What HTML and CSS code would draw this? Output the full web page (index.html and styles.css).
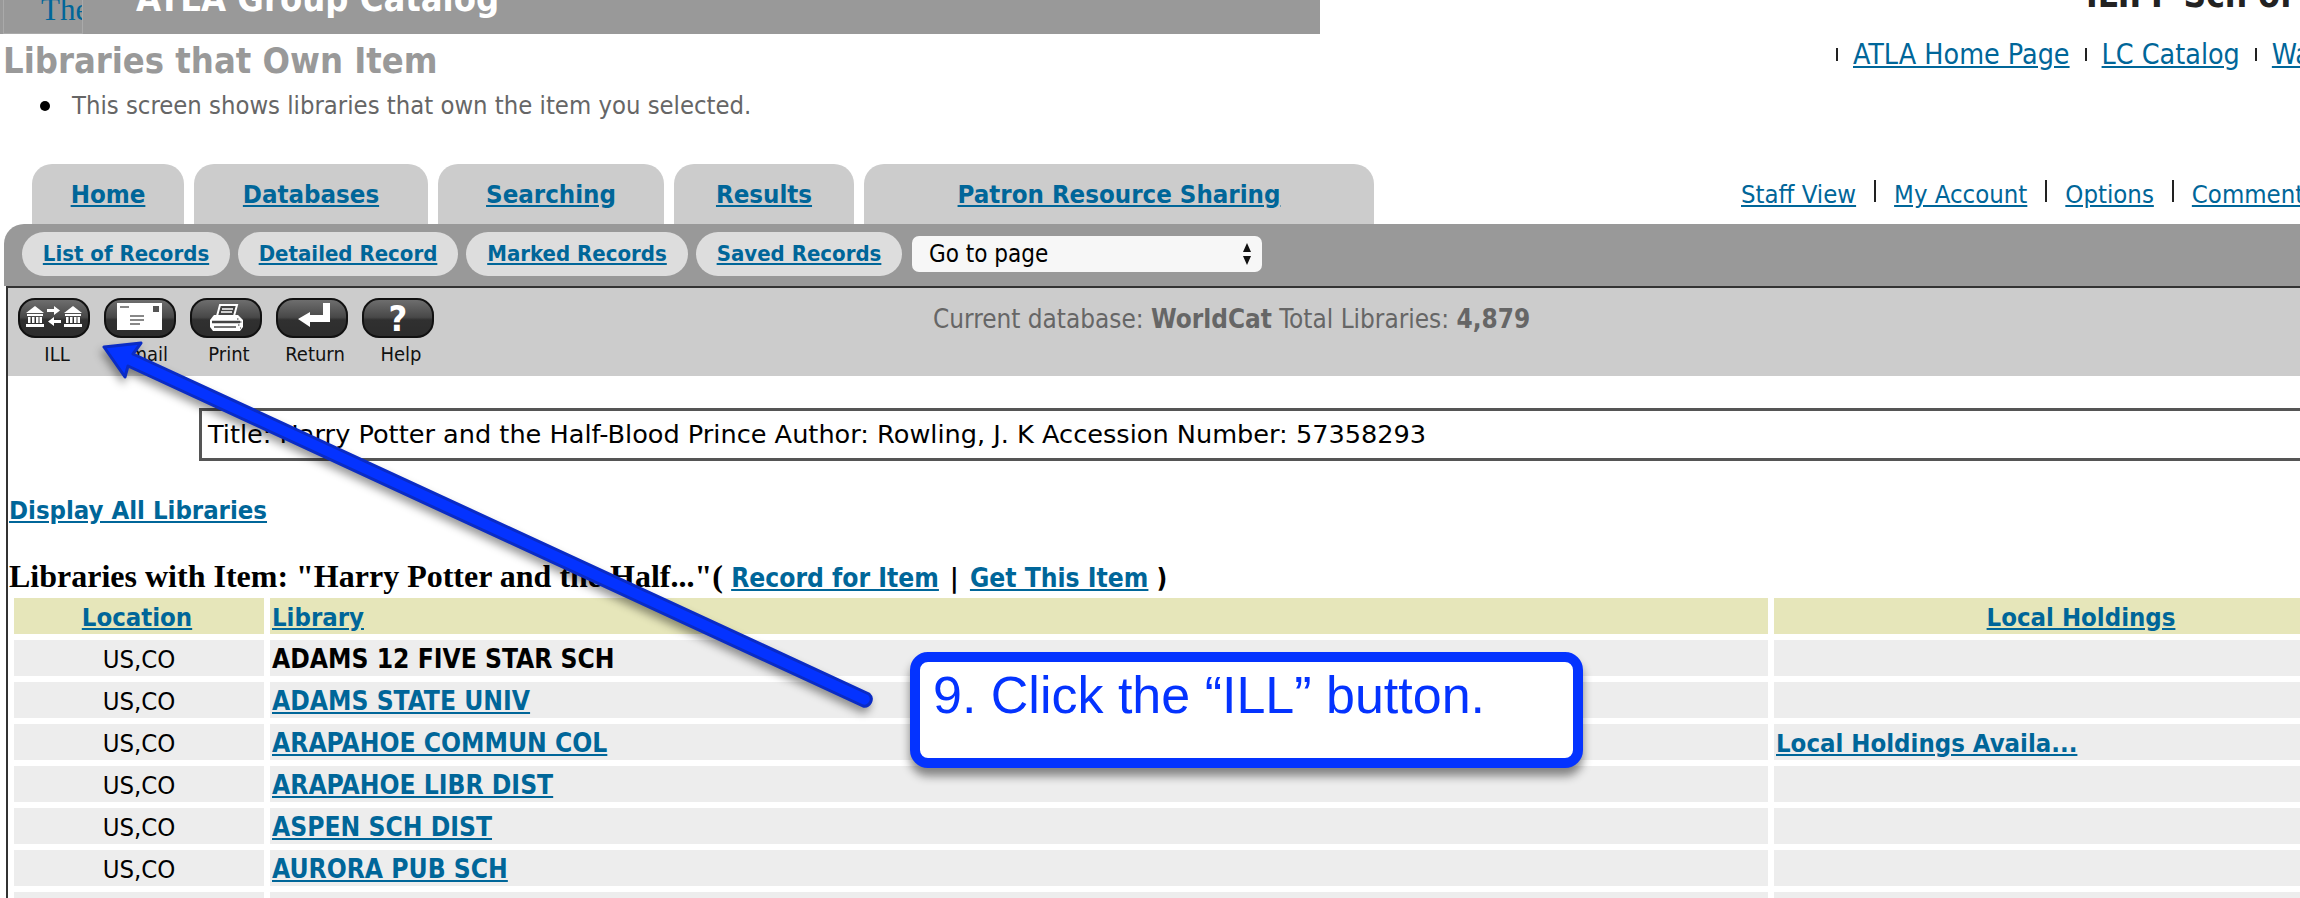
FILE: index.html
```html
<!DOCTYPE html>
<html lang="en">
<head>
    <meta charset="UTF-8">
    <title>Libraries that Own Item</title>
    <link rel="stylesheet" href="styles.css">
</head>
<body>
    <div class="top">
        <div class="banner">
            <div class="logo"><span>The</span></div>
            <div class="catalog-name">ATLA Group Catalog</div>
        </div>
        <div class="org-name">ILIFF Sch of</div>
    </div>

    <div class="intro">
        <div>
            <h1>Libraries that Own Item</h1>
            <ul>
                <li>This screen shows libraries that own the item you selected.</li>
            </ul>
        </div>
        <div class="links top-links">
            <i></i><a href="#">ATLA Home Page</a>
            <i></i><a href="#">LC Catalog</a>
            <i></i><a href="#">WatchList</a>
        </div>
    </div>

    <div class="tab-row">
        <div class="tabs">
            <a class="tab tab-home" href="#">Home</a>
            <a class="tab tab-db" href="#">Databases</a>
            <a class="tab tab-search" href="#">Searching</a>
            <a class="tab tab-results" href="#">Results</a>
            <a class="tab tab-patron" href="#">Patron Resource Sharing</a>
        </div>
        <div class="links side-links">
            <a href="#">Staff View</a><i></i>
            <a href="#">My Account</a><i></i>
            <a href="#">Options</a><i></i>
            <a href="#">Comments</a>
        </div>
    </div>

    <div class="subbar">
        <a class="pill pill-list" href="#">List of Records</a>
        <a class="pill pill-detail" href="#">Detailed Record</a>
        <a class="pill pill-marked" href="#">Marked Records</a>
        <a class="pill pill-saved" href="#">Saved Records</a>
        <div class="goto">
            <span>Go to page</span>
            <svg width="10" height="24" viewBox="0 0 10 24"><path d="M5 1l4 9H1zM5 23l4-9H1z" fill="#111"/></svg>
        </div>
    </div>

    <div class="content">
        <div class="toolbar">
            <div class="tools">
                <div class="tool">
                    <svg class="tool-btn" viewBox="0 0 72 40">
                        <rect x="1" y="1" width="70" height="38" rx="16" fill="url(#btn)" stroke="#111" stroke-width="2"/>
                        <g fill="#fff">
                            <path d="M17 8l9 7H8z"/><path d="M9 16h16v2H9zM10 19h2.500v6H10zM14 19h2.500v6H14zM18 19h2.500v6H18zM21.500 19h2.500v6h-2.500zM8 26h18v3H8z"/>
                            <path d="M55 8l9 7H46z"/><path d="M47 16h16v2H47zM48 19h2.500v6H48zM52 19h2.500v6H52zM56 19h2.500v6H56zM59.500 19h2.500v6h-2.500zM46 26h18v3H46z"/>
                            <path d="M29 11h7V8l6 4.500-6 4.500v-3h-7zM43 22h-7v-3l-6 4.500 6 4.500v-3h7z"/>
                        </g>
                    </svg>
                    <span>ILL</span>
                </div>
                <div class="tool">
                    <svg class="tool-btn" viewBox="0 0 72 40">
                        <rect x="1" y="1" width="70" height="38" rx="16" fill="url(#btn)" stroke="#111" stroke-width="2"/>
                        <rect x="13" y="5" width="45" height="27" fill="#fff"/>
                        <rect x="49" y="8" width="6" height="6" fill="#555"/>
                        <path d="M16 9h9M26 18h14M26 22h14M26 26h10" stroke="#888" stroke-width="2"/>
                    </svg>
                    <span>Email</span>
                </div>
                <div class="tool">
                    <svg class="tool-btn" viewBox="0 0 72 40">
                        <rect x="1" y="1" width="70" height="38" rx="16" fill="url(#btn)" stroke="#111" stroke-width="2"/>
                        <path d="M30 7h17l-3 11H27z" fill="#444" stroke="#fff" stroke-width="2"/>
                        <path d="M32 11h11M31 14h11" stroke="#fff" stroke-width="1.500"/>
                        <path d="M24 17h24l5 5v7l-3 4H23l-3-4v-7z" fill="#fff"/>
                        <path d="M22 24h28" stroke="#444" stroke-width="2.500"/>
                        <path d="M24 29h22" stroke="#444" stroke-width="1.500"/>
                        <path d="M47 21h1.500M50 24h1.500M48 27h1.500M50 30h1" stroke="#777" stroke-width="1.500"/>
                    </svg>
                    <span>Print</span>
                </div>
                <div class="tool">
                    <svg class="tool-btn" viewBox="0 0 72 40">
                        <rect x="1" y="1" width="70" height="38" rx="16" fill="url(#btn)" stroke="#111" stroke-width="2"/>
                        <path d="M47 5h7v19H34v5L22 21l12-7v3h13z" fill="#fff"/>
                    </svg>
                    <span>Return</span>
                </div>
                <div class="tool">
                    <svg class="tool-btn" viewBox="0 0 72 40">
                        <rect x="1" y="1" width="70" height="38" rx="16" fill="url(#btn)" stroke="#111" stroke-width="2"/>
                        <text x="36" y="33" text-anchor="middle" class="help-mark">?</text>
                    </svg>
                    <span>Help</span>
                </div>
            </div>
            <div class="status">Current database: <b>WorldCat</b> Total Libraries: <b>4,879</b></div>
        </div>

        <div class="item-box">Title: Harry Potter and the Half-Blood Prince Author: Rowling, J. K Accession Number: 57358293</div>

        <a class="display-all" href="#">Display All Libraries</a>

        <div class="list-head">
            <b>Libraries with Item: "Harry Potter and the Half..."(</b>
            <a href="#">Record for Item</a>
            <span class="sep">|</span>
            <a href="#">Get This Item</a>
            <span>)</span>
        </div>

        <table class="libs">
            <colgroup>
                <col class="col-loc"><col class="col-lib"><col class="col-hold">
            </colgroup>
            <tr class="head-row">
                <th class="loc-head"><a href="#">Location</a></th>
                <th class="left"><a href="#">Library</a></th>
                <th><a href="#">Local Holdings</a></th>
            </tr>
            <tr><td class="loc">US,CO</td><td><b>ADAMS 12 FIVE STAR SCH</b></td><td></td></tr>
            <tr><td class="loc">US,CO</td><td><a href="#">ADAMS STATE UNIV</a></td><td></td></tr>
            <tr><td class="loc">US,CO</td><td><a href="#">ARAPAHOE COMMUN COL</a></td><td><a class="hold-link" href="#">Local Holdings Availa...</a></td></tr>
            <tr><td class="loc">US,CO</td><td><a href="#">ARAPAHOE LIBR DIST</a></td><td></td></tr>
            <tr><td class="loc">US,CO</td><td><a href="#">ASPEN SCH DIST</a></td><td></td></tr>
            <tr><td class="loc">US,CO</td><td><a href="#">AURORA PUB SCH</a></td><td></td></tr>
            <tr><td></td><td></td><td></td></tr>
        </table>
    </div>

    <svg class="arrow" width="2300" height="898" viewBox="0 0 2300 898">
        <defs>
            <linearGradient id="btn" x1="0" y1="0" x2="0" y2="1">
                <stop offset="0" stop-color="#707070"/>
                <stop offset="0.48" stop-color="#484848"/>
                <stop offset="0.55" stop-color="#303030"/>
                <stop offset="1" stop-color="#2c2c2c"/>
            </linearGradient>
        </defs>
        <path class="arrow-shape" d="M104 347L141 343L133 354L869 694A7 7 0 0 1 863 706L128 366L125 377z"/>
    </svg>

    <div class="callout">9. Click the “ILL” button.</div>
</body>
</html>
```

FILE: styles.css
```css
body {
    margin: 0;
    width: 2300px;
    height: 898px;
    overflow: hidden;
    position: relative;
    background-color: #fff;
    font-family: "DejaVu Sans", sans-serif;
    font-stretch: condensed;
    font-size: 24px;
    color: #000;
}

a {
    color: #006699;
}

.top {
    display: flex;
    height: 34px;
    overflow: hidden;
}

.banner {
    width: 1320px;
    height: 34px;
    background-color: #999;
    display: flex;
    align-items: flex-end;
    overflow: hidden;
}

.logo {
    width: 78px;
    height: 33px;
    margin-left: 3px;
    border: 1px solid #aaa;
    border-top: none;
    overflow: hidden;
    display: flex;
    align-items: flex-end;
}

.logo span {
    margin: 0 0 7px 37px;
    font-family: "Liberation Serif", serif;
    font-size: 31px;
    line-height: 32px;
    color: #006699;
}

.catalog-name {
    margin: 0 0 17px 53px;
    font-size: 36px;
    line-height: 36px;
    font-weight: bold;
    color: #fff;
}

.org-name {
    margin-left: 766px;
    margin-top: -25px;
    font-size: 35px;
    font-weight: bold;
    color: #222;
    white-space: nowrap;
}

.intro {
    display: grid;
    grid-template-columns: 1836px 1fr;
    height: 130px;
}

h1 {
    margin: 7px 0 0 3px;
    font-size: 36px;
    line-height: 40px;
    color: #999;
}

ul {
    margin: 8px 0 0;
    padding-left: 72px;
    font-size: 25.400px;
    line-height: 32px;
    color: #666;
    list-style: none;
}

li::before {
    content: "";
    display: inline-block;
    width: 10px;
    height: 10px;
    margin: 0 22px 0 -32px;
    border-radius: 50%;
    background-color: #000;
    vertical-align: 3px;
}

.links {
    display: flex;
    align-items: center;
    white-space: nowrap;
}

.links i {
    display: block;
    width: 2px;
    background-color: #222;
}

.top-links {
    height: 41px;
    gap: 15px;
    font-size: 28.400px;
}

.top-links i {
    height: 13px;
}

.tab-row {
    display: grid;
    grid-template-columns: 1741px 1fr;
    height: 60px;
}

.tabs {
    display: flex;
    gap: 10px;
    padding-left: 32px;
}

.tab {
    box-sizing: border-box;
    height: 60px;
    padding-top: 13px;
    text-align: center;
    background-color: #ccc;
    border-radius: 20px 20px 0 0;
    font-size: 25.600px;
    font-weight: bold;
    line-height: 34px;
}

.tab-home { width: 152px; }
.tab-db { width: 234px; }
.tab-search { width: 226px; }
.tab-results { width: 180px; }
.tab-patron { width: 510px; }

.side-links {
    height: 60px;
    gap: 18px;
    font-size: 25.500px;
}

.side-links i {
    height: 22px;
    margin-top: -6px;
}

.subbar {
    margin-left: 4px;
    height: 62px;
    box-sizing: border-box;
    padding: 8px 18px 0;
    background-color: #999;
    border-radius: 20px 0 0 0;
    display: flex;
    gap: 8px;
}

.pill {
    box-sizing: border-box;
    height: 44px;
    line-height: 44px;
    text-align: center;
    background-color: #ddd;
    border-radius: 22px;
    font-size: 22px;
    font-weight: bold;
}

.pill-list { width: 208px; }
.pill-detail { width: 220px; }
.pill-marked { width: 222px; }
.pill-saved { width: 206px; }

.goto {
    box-sizing: border-box;
    width: 350px;
    height: 36px;
    margin: 4px 0 0 2px;
    padding: 0 10px 0 17px;
    background-color: #f7f7f7;
    border-radius: 7px;
    display: flex;
    align-items: center;
    justify-content: space-between;
    font-size: 24px;
}

.content {
    margin-left: 6px;
    border-left: 2px solid #333;
    border-top: 2px solid #333;
    height: 620px;
}

.toolbar {
    height: 88px;
    background-color: #ccc;
    display: flex;
}

.tools {
    display: flex;
    gap: 14px;
    padding: 10px 0 0 10px;
}

.tool {
    width: 72px;
    font-size: 20px;
    text-align: center;
    display: flex;
    flex-direction: column;
    align-items: center;
}

.tool span {
    margin: 4px 0 0 6px;
    line-height: 24px;
    color: #111;
}

.tool-btn {
    width: 72px;
    height: 40px;
    display: block;
}

.help-mark {
    font-size: 36px;
    font-weight: bold;
    fill: #fff;
}

.status {
    margin-left: 499px;
    padding-top: 15px;
    color: #666;
    font-size: 25.900px;
    line-height: 32px;
    white-space: nowrap;
}

.item-box {
    box-sizing: border-box;
    margin: 32px 0 0 191px;
    width: 2200px;
    height: 53px;
    border: 3px solid #555;
    padding-left: 6px;
    font-size: 25.600px;
    line-height: 47px;
    font-stretch: normal;
    white-space: nowrap;
}

.display-all {
    display: block;
    width: max-content;
    margin: 33px 0 0 1px;
    font-size: 25.500px;
    font-weight: bold;
    line-height: 32px;
}

.list-head {
    margin: 34px 0 0 1px;
    height: 32px;
    line-height: 32px;
    font-size: 26.200px;
    font-weight: bold;
    white-space: nowrap;
}

.list-head b {
    font-family: "Liberation Serif", serif;
    font-size: 32px;
}

.list-head .sep {
    margin: 0 3px;
}

.libs {
    table-layout: fixed;
    width: 2386px;
    border-collapse: separate;
    border-spacing: 6px;
}

.col-loc { width: 250px; }
.col-lib { width: 1498px; }

.libs tr {
    height: 36px;
}

.libs td,
.libs th {
    padding: 1px 2px 0;
    height: 36px;
    box-sizing: border-box;
    background-color: #ededed;
    font-size: 26.200px;
    font-weight: bold;
    white-space: nowrap;
}

.libs th {
    background-color: #e6e6ba;
    text-align: center;
    font-size: 25.500px;
}

.libs th.loc-head {
    padding-right: 6px;
}

.libs th.left {
    text-align: left;
}

.libs td.loc {
    text-align: center;
    font-weight: normal;
    font-size: 25.500px;
}

.libs .hold-link {
    font-size: 25.500px;
}

.arrow {
    position: absolute;
    left: 0;
    top: 0;
    pointer-events: none;
}

.arrow-shape {
    fill: #0433ff;
    stroke: #0a2bc4;
    stroke-width: 3;
    stroke-linejoin: round;
    filter: drop-shadow(-2px 5px 4px rgba(0, 0, 0, 0.4));
}

.callout {
    position: absolute;
    left: 910px;
    top: 652px;
    box-sizing: border-box;
    width: 673px;
    height: 116px;
    padding: 4px 0 0 13px;
    background-color: #fff;
    border: 10px solid #0433ff;
    border-radius: 18px;
    box-shadow: 0 8px 10px rgba(0, 0, 0, 0.45);
    font-family: "Liberation Sans", sans-serif;
    font-size: 52px;
    line-height: 58px;
    color: #0433ff;
    white-space: nowrap;
}
```
